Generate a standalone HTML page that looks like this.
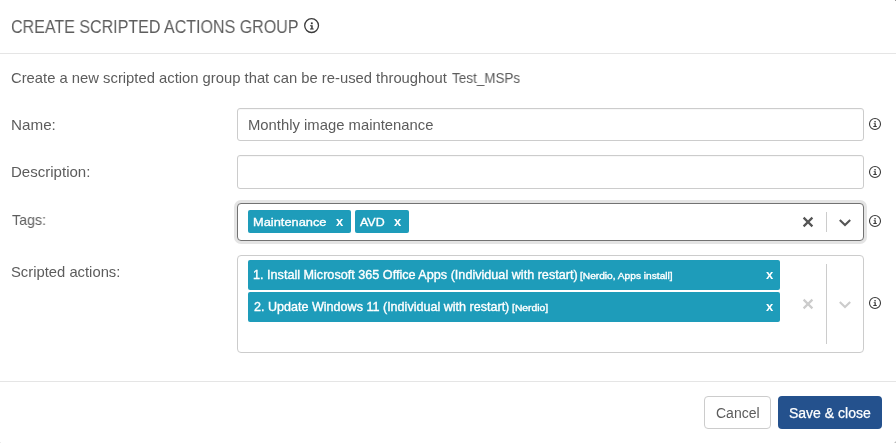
<!DOCTYPE html>
<html lang="en">
<head>
<meta charset="utf-8">
<title>Create scripted actions group</title>
<style>
*{box-sizing:border-box;margin:0;padding:0}
html,body{width:896px;height:443px;overflow:hidden;background:#fff}
body{font-family:"Liberation Sans","DejaVu Sans",sans-serif;color:#5c5c5c;font-size:14px;position:relative}
.abs{position:absolute;white-space:nowrap}
.t{position:absolute;white-space:nowrap;line-height:20px;height:20px;transform-origin:0 50%;will-change:transform}
.hdr{left:0;top:53px;width:896px;height:1px;background:#e5e5e5}
.inp{left:237px;width:627px;border:1px solid #ccc;border-radius:3px;background:#fff;box-shadow:inset 0 1px 1px rgba(0,0,0,.03)}
.chip{background:#1e9cba;border-radius:2px}
.w{color:#fff;font-weight:bold}
.sb{color:#fff;font-weight:normal;-webkit-text-stroke:0.35px #fff}
.ftr{left:0;top:381px;width:896px;height:1px;background:#e5e5e5}
.btn{top:396px;height:33px;border-radius:4px}
.cancel{left:704px;width:67px;border:1px solid #ccc;background:#fff}
.save{left:778px;width:104px;background:#24518d}
</style>
</head>
<body>
<div class="abs hdr"></div>
<span id="title" class="t" style="left:11.2px;top:17px;font-size:18px;color:#5e5e5e;transform:scaleX(0.8907)">CREATE SCRIPTED ACTIONS GROUP</span>
<svg class="abs" style="left:303px;top:17px" width="17" height="17" viewBox="0 0 17 17"><circle cx="8.6" cy="8.6" r="6.9" fill="none" stroke="#3a3a3a" stroke-width="1.3"/><rect x="7.9" y="5.4" width="1.8" height="1.8" fill="#333"/><path d="M7.1 8.2h2.6v3.4h1v1H7v-1h1.2V9.2H7.1z" fill="#333"/></svg>
<span id="intro" class="t" style="font-size:14.4px;left:11px;top:68px;transform:scaleX(1.028)">Create a new scripted action group that can be re-used throughout</span>
<span id="intro2" class="t" style="font-size:14.4px;left:452px;top:68px;transform:scaleX(0.936)">Test_MSPs</span>

<span id="l1" class="t" style="font-size:14.4px;left:11px;top:115px;transform:scaleX(1.0575)">Name:</span>
<div class="abs inp" style="top:108px;height:33px"></div>
<span id="v1" class="t" style="font-size:14.4px;left:247.6px;top:115px;transform:scaleX(1.0307)">Monthly image maintenance</span>

<span id="l2" class="t" style="font-size:14.4px;left:11px;top:162px;transform:scaleX(1.0446)">Description:</span>
<div class="abs inp" style="top:155px;height:34px"></div>

<span id="l3" class="t" style="font-size:14.4px;left:12px;top:210px;transform:scaleX(0.985)">Tags:</span>
<div class="abs inp" style="top:203px;height:38px;border-color:#727272;border-radius:4px;box-shadow:0 0 0 3px #e4e4e4"></div>
<div class="abs chip" style="left:248px;top:210px;width:103px;height:22.5px"></div>
<span id="c1" class="t sb" style="left:252.7px;top:212px;font-size:11.6px;transform:scaleX(1.106896551724138)">Maintenance</span>
<span id="x1" class="t w" style="left:336px;top:212px;font-size:13px">x</span>
<div class="abs chip" style="left:355px;top:210px;width:54px;height:22.5px"></div>
<span id="c2" class="t sb" style="left:359.5px;top:212px;font-size:11.6px;transform:scaleX(1.0717241379310345)">AVD</span>
<span id="x2" class="t w" style="left:394px;top:212px;font-size:13px">x</span>
<svg class="abs" style="left:802px;top:216px" width="12" height="12" viewBox="0 0 12 12"><path d="M1.6 1.6l8.8 8.8M10.4 1.6l-8.8 8.8" stroke="#555" stroke-width="2.2" fill="none"/></svg>
<div class="abs" style="left:826px;top:212px;width:1px;height:20px;background:#ccc"></div>
<svg class="abs" style="left:838px;top:218px" width="14" height="9" viewBox="0 0 14 9"><path d="M1.8 2l5.2 5 5.2-5" stroke="#555" stroke-width="2.1" fill="none"/></svg>

<span id="l4" class="t" style="font-size:14.4px;left:10.7px;top:262px;transform:scaleX(1.028)">Scripted actions:</span>
<div class="abs inp" style="top:255px;height:98px;border-radius:4px;box-shadow:none"></div>
<div class="abs chip" style="left:248px;top:260px;width:532px;height:29.5px"></div>
<span id="a1" class="t sb" style="left:252.8px;top:265px;font-size:12.2px;transform:scaleX(1.0358852459016392)">1. Install Microsoft 365 Office Apps (Individual with restart)</span>
<span id="s1" class="t sb" style="left:580px;top:266px;font-size:9.3px;transform:scaleX(1.093010752688172)">[Nerdio, Apps install]</span>
<span id="x3" class="t w" style="left:765.5px;top:265px;font-size:13px">x</span>
<div class="abs chip" style="left:248px;top:292px;width:532px;height:29.5px"></div>
<span id="a2" class="t sb" style="left:253.6px;top:297px;font-size:12.2px;transform:scaleX(1.03072131147541)">2. Update Windows 11 (Individual with restart)</span>
<span id="s2" class="t sb" style="left:512px;top:298px;font-size:9.3px;transform:scaleX(1.1134408602150536)">[Nerdio]</span>
<span id="x4" class="t w" style="left:765.5px;top:297px;font-size:13px">x</span>
<svg class="abs" style="left:802px;top:298px" width="12" height="12" viewBox="0 0 12 12"><path d="M1.6 1.6l8.8 8.8M10.4 1.6l-8.8 8.8" stroke="#ccc" stroke-width="2.2" fill="none"/></svg>
<div class="abs" style="left:826px;top:264px;width:1px;height:80px;background:#ccc"></div>
<svg class="abs" style="left:838px;top:300px" width="14" height="9" viewBox="0 0 14 9"><path d="M1.8 2l5.2 5 5.2-5" stroke="#ccc" stroke-width="2.1" fill="none"/></svg>

<svg class="abs" style="left:868.2px;top:116.9px" width="14" height="14" viewBox="0 0 14 14"><circle cx="7" cy="7" r="5.5" fill="none" stroke="#3a3a3a" stroke-width="1.1"/><rect x="6.3" y="4.1" width="1.5" height="1.3" fill="#3a3a3a"/><path d="M5.7 6.2h2.1v2.9h1v.9H5.3v-.9h1.2V7.1H5.7z" fill="#3a3a3a"/></svg>
<svg class="abs" style="left:868.2px;top:164.9px" width="14" height="14" viewBox="0 0 14 14"><circle cx="7" cy="7" r="5.5" fill="none" stroke="#3a3a3a" stroke-width="1.1"/><rect x="6.3" y="4.1" width="1.5" height="1.3" fill="#3a3a3a"/><path d="M5.7 6.2h2.1v2.9h1v.9H5.3v-.9h1.2V7.1H5.7z" fill="#3a3a3a"/></svg>
<svg class="abs" style="left:868.2px;top:214px" width="14" height="14" viewBox="0 0 14 14"><circle cx="7" cy="7" r="5.5" fill="none" stroke="#3a3a3a" stroke-width="1.1"/><rect x="6.3" y="4.1" width="1.5" height="1.3" fill="#3a3a3a"/><path d="M5.7 6.2h2.1v2.9h1v.9H5.3v-.9h1.2V7.1H5.7z" fill="#3a3a3a"/></svg>
<svg class="abs" style="left:868.2px;top:296px" width="14" height="14" viewBox="0 0 14 14"><circle cx="7" cy="7" r="5.5" fill="none" stroke="#3a3a3a" stroke-width="1.1"/><rect x="6.3" y="4.1" width="1.5" height="1.3" fill="#3a3a3a"/><path d="M5.7 6.2h2.1v2.9h1v.9H5.3v-.9h1.2V7.1H5.7z" fill="#3a3a3a"/></svg>
<div class="abs ftr"></div>
<div class="abs btn cancel"></div>
<span id="b1" class="t" style="left:716px;top:403px;font-size:14px">Cancel</span>
<div class="abs btn save"></div>
<span id="b2" class="t" style="left:789px;top:403px;font-size:14px;color:#fff;-webkit-text-stroke:0.25px #fff">Save &amp; close</span>
<div class="abs" style="left:895px;top:0;width:1px;height:1px;background:#999"></div>
<div class="abs" style="left:895px;top:442px;width:1px;height:1px;background:#bbb"></div>
<div class="abs" style="left:894px;top:442px;width:1px;height:1px;background:#e0e0e0"></div>
<div class="abs" style="left:895px;top:441px;width:1px;height:1px;background:#e0e0e0"></div>
<div class="abs" style="left:0;top:442px;width:1px;height:1px;background:#ececec"></div>
</body>
</html>
